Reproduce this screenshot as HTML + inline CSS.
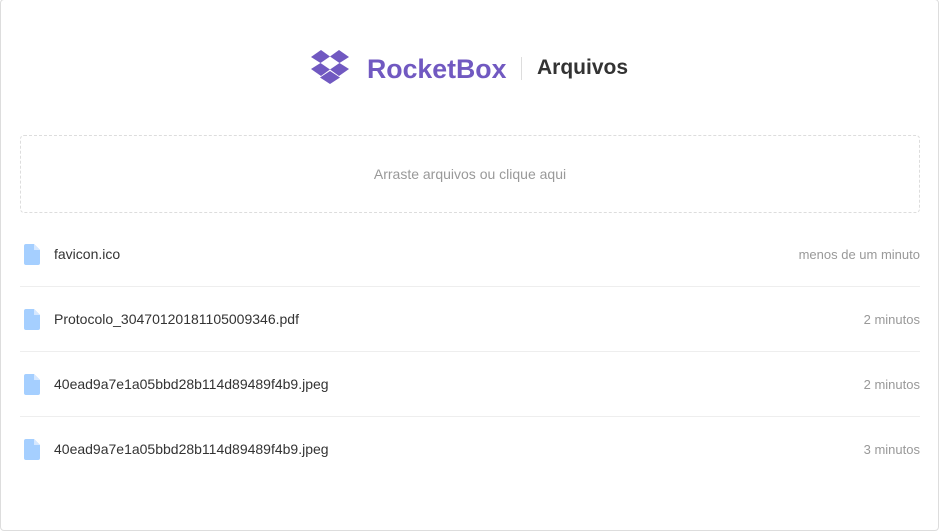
<!DOCTYPE html>
<html><head><meta charset="utf-8"><style>
*{box-sizing:border-box;margin:0;padding:0}
body{width:940px;height:531px;background:#fff;font-family:"Liberation Sans",Arial,sans-serif;overflow:hidden;position:relative}
.box{position:absolute;left:0;top:-1px;width:939px;height:532px;border:1px solid #ddd;border-radius:4px}
.logo{position:absolute;left:311px;top:50px}
.brand{position:absolute;left:367px;top:52px;font-size:26.7px;font-weight:bold;color:#7159c1;line-height:34px}
.div{position:absolute;left:521px;top:57px;width:1px;height:23px;background:#ddd}
.title{position:absolute;left:537px;top:56px;font-size:21px;font-weight:bold;color:#333;line-height:24px}
.drop{position:absolute;left:20px;top:135px;width:900px;height:78px;border:1px dashed #ddd;border-radius:4px;text-align:center;line-height:76px;color:#999;font-size:14px}
.row{position:absolute;left:20px;width:900px;height:65px}
.row .n{position:absolute;left:34px;top:0;line-height:65px;font-size:14px;color:#333}
.row .t{position:absolute;right:0;top:0;line-height:65px;font-size:13px;color:#999}
.row svg{position:absolute;left:4px;top:22px}
.row.b{border-bottom:1px solid #eee}
</style></head><body>
<div class="box"></div>
<svg class="logo" width="38" height="35" viewBox="0 0 38 35" fill="#7159c1">
<path d="M0 7 L10 0 L19 6.5 L9.5 13 Z"/>
<path d="M19 6.5 L28 0 L38 7 L28.5 13 Z"/>
<path d="M0 19 L9.5 13 L19 19.5 L10 26 Z"/>
<path d="M38 19 L28.5 13 L19 19.5 L28 26 Z"/>
<path d="M9 27.5 L19 21 L29 27.5 L19 34 Z"/>
</svg>
<div class="brand">RocketBox</div>
<div class="div"></div>
<div class="title">Arquivos</div>
<div class="drop">Arraste arquivos ou clique aqui</div>
<div class="row b" style="top:222px"><svg width="16" height="21" viewBox="0 0 16 21"><path d="M2 0H10L16 6V19A2 2 0 0 1 14 21H2A2 2 0 0 1 0 19V2A2 2 0 0 1 2 0Z" fill="#a5cfff"/><path d="M10 0V6H16Z" fill="#d6e8ff"/></svg><span class="n">favicon.ico</span><span class="t">menos de um minuto</span></div>
<div class="row b" style="top:287px"><svg width="16" height="21" viewBox="0 0 16 21"><path d="M2 0H10L16 6V19A2 2 0 0 1 14 21H2A2 2 0 0 1 0 19V2A2 2 0 0 1 2 0Z" fill="#a5cfff"/><path d="M10 0V6H16Z" fill="#d6e8ff"/></svg><span class="n">Protocolo_30470120181105009346.pdf</span><span class="t">2 minutos</span></div>
<div class="row b" style="top:352px"><svg width="16" height="21" viewBox="0 0 16 21"><path d="M2 0H10L16 6V19A2 2 0 0 1 14 21H2A2 2 0 0 1 0 19V2A2 2 0 0 1 2 0Z" fill="#a5cfff"/><path d="M10 0V6H16Z" fill="#d6e8ff"/></svg><span class="n">40ead9a7e1a05bbd28b114d89489f4b9.jpeg</span><span class="t">2 minutos</span></div>
<div class="row" style="top:417px"><svg width="16" height="21" viewBox="0 0 16 21"><path d="M2 0H10L16 6V19A2 2 0 0 1 14 21H2A2 2 0 0 1 0 19V2A2 2 0 0 1 2 0Z" fill="#a5cfff"/><path d="M10 0V6H16Z" fill="#d6e8ff"/></svg><span class="n">40ead9a7e1a05bbd28b114d89489f4b9.jpeg</span><span class="t">3 minutos</span></div>
</body></html>
